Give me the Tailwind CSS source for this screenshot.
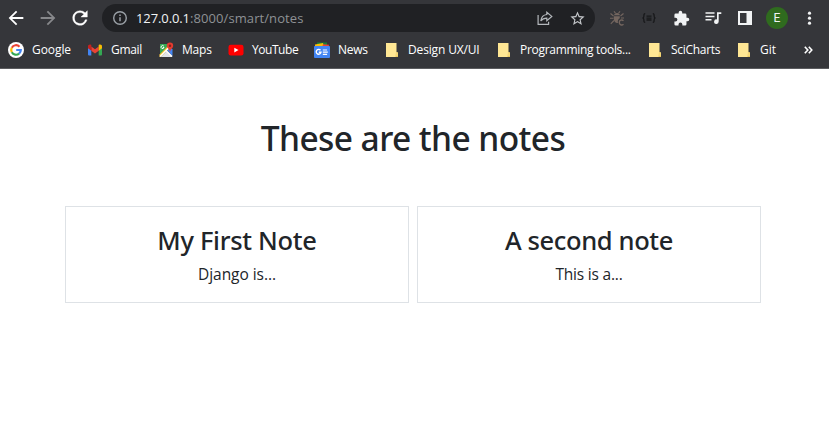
<!DOCTYPE html>
<html lang="en">
<head>
<meta charset="utf-8">
<title>Notes</title>
<script src="https://cdn.jsdelivr.net/npm/@tailwindcss/browser@4"></script>
</head>
<body class="h-[421px] overflow-hidden bg-white font-['Open_Sans','Noto_Sans',sans-serif] text-[#212529]">
<header class="h-[69px] border-b border-[#5b5c5f] bg-[#35363a] text-white">
  <!-- Toolbar -->
  <div class="flex h-9 items-center">
    <div class="flex w-[102px] text-white">
      <span class="flex w-8 justify-center"><svg class="size-[22px]" viewBox="0 0 24 24" fill="currentColor"><path d="M20 11H7.8l5.6-5.6L12 4l-8 8 8 8 1.4-1.4L7.8 13H20z"/></svg></span>
      <span class="flex w-8 justify-center text-[#87888b]"><svg class="size-[22px]" viewBox="0 0 24 24" fill="currentColor"><path d="M4 13h12.2l-5.6 5.6L12 20l8-8-8-8-1.4 1.4 5.6 5.6H4z"/></svg></span>
      <span class="flex w-8 justify-center"><svg class="size-[22px]" viewBox="0 0 24 24" fill="currentColor" stroke="currentColor" stroke-width=".4"><path d="M17.65 6.35A7.96 7.96 0 0 0 12 4a8 8 0 1 0 7.73 10h-2.08A6 6 0 1 1 12 6c1.66 0 3.14.69 4.22 1.78L13 11h7V4z"/></svg></span>
    </div>
    <div class="flex h-7 w-[493px] items-center rounded-full bg-[#202124] pl-[10px]">
      <svg class="size-4" viewBox="0 0 16 16" fill="none" stroke="#9aa0a6" stroke-width="1.4"><circle cx="8" cy="8" r="6.3"/><path d="M8 7.2v4M8 4.4V6" stroke-width="1.5"/></svg>
      <span class="ml-2 flex-1 whitespace-nowrap text-[13px] leading-4"><span class="tracking-[-0.1px] text-[#f1f3f4]">127.0.0.1</span><span class="tracking-[0.09px] text-[#8e9195]">:8000/smart/notes</span></span>
      <span class="flex w-8 justify-center"><svg class="size-4" viewBox="0 0 16 16" fill="none" stroke="#b4b8bc" stroke-width="1.2"><path d="M1.1 5v9.4h10.5v-2.6M9.8 2.2l5 4.2-5 4.2V8.2C7.200 8.200 5.200 9 3.800 11 4.200 7.600 6 4.900 9.800 4.500z"/></svg></span>
      <span class="mr-0.5 flex w-8 justify-center"><svg class="size-[17px]" viewBox="0 0 24 24" fill="#c4c7ca"><path d="m22 9.240-7.190-.620L12 2 9.190 8.630 2 9.240l5.460 4.730L5.820 21 12 17.270 18.180 21l-1.630-7.030zM12 15.400l-3.760 2.270 1-4.280-3.320-2.880 4.380-.380L12 6.100l1.710 4.040 4.380.380-3.320 2.880 1 4.280z"/></svg></span>
    </div>
    <div class="ml-1.5 flex items-center text-[#f1f3f4]">
      <span class="flex w-8 justify-center"><svg class="size-4" viewBox="0 0 16 16" fill="none" stroke="#74665f" stroke-width="1.100"><path d="M5 1.200 6.500 3.300M11 1.200 9.500 3.300M1.500 3.500 4.500 6M14.500 3.500 11.500 6M1 8.300h3.500M1.800 13.800 5 10.500M12 8H15"/><path d="M8 3C6.200 3 5.200 4 5 5.300h6C10.800 4 9.800 3 8 3zM4.800 6.300h6v1.900C9 9 8.500 11 9 12.900c-2.300.500-4.200-1.700-4.200-4z" fill="#74665f" stroke="none"/><path d="M14.500 10.700c-1.700-1.400-4.200-.500-4.200 1.800s2.500 3.200 4.200 1.800" stroke-width="1.400"/></svg></span>
      <span class="flex w-8 justify-center"><svg class="size-4" viewBox="0 0 16 16" fill="none" stroke="#17181a" stroke-width="1.300"><path d="M4.200 3.700C2.800 3.700 2.900 4.600 2.900 6S2.600 8 1.500 8c1.100 0 1.400.600 1.400 2s-.1 2.300 1.300 2.300M11.800 3.700c1.400 0 1.300.900 1.300 2.300s.3 2 1.400 2c-1.100 0-1.400.600-1.400 2s.1 2.300-1.300 2.300M5.500 6.200h5M5.500 8.100h5M5.500 10h5"/></svg></span>
      <span class="flex w-8 justify-center"><svg class="size-[17px]" viewBox="0 0 24 24" fill="currentColor"><path d="M20.500 11H19V7a2 2 0 0 0-2-2h-4V3.500a2.500 2.500 0 0 0-5 0V5H4a2 2 0 0 0-2 2v3.800h1.500a2.700 2.700 0 0 1 0 5.400H2V20a2 2 0 0 0 2 2h3.800v-1.500a2.700 2.700 0 0 1 5.400 0V22H17a2 2 0 0 0 2-2v-4h1.500a2.500 2.500 0 0 0 0-5z"/></svg></span>
      <span class="flex w-8 justify-center"><svg class="h-4 w-[17px]" viewBox="0 0 17 16" fill="currentColor"><path d="M.5 2.300h9v1.500h-9zM.5 5.700h9v1.500h-9zM.5 9.100h6v1.500h-6zM12 2.300h4.300v1.600h-2.600v7.700A2.300 2.300 0 1 1 12 9.400z"/></svg></span>
      <span class="flex w-8 justify-center"><svg class="size-[14px]" viewBox="0 0 14 14" fill="currentColor"><path fill-rule="evenodd" d="M0 0h14v14H0zM2 2v10h6.500V2z"/></svg></span>
      <span class="flex w-8 justify-center"><span class="flex size-[22px] items-center justify-center rounded-full bg-[#2f6b1e] font-[Roboto,sans-serif] text-[12px] leading-none">E</span></span>
      <span class="flex w-8 justify-center"><svg class="size-4" viewBox="0 0 16 16" fill="currentColor"><circle cx="8.500" cy="3.200" r="1.600"/><circle cx="8.500" cy="8.200" r="1.600"/><circle cx="8.500" cy="13.200" r="1.600"/></svg></span>
    </div>
  </div>
  <!-- Bookmarks bar -->
  <nav class="flex h-7 items-center whitespace-nowrap pl-2 text-[12px] leading-4">
    <svg class="mr-2 size-4 shrink-0" viewBox="0 0 16 16"><circle cx="8" cy="8" r="8" fill="#fff"/><g fill="none" stroke-width="2.200"><path d="M11.500 4.700A4.800 4.800 0 0 0 3.800 5.700" stroke="#ea4335"/><path d="M3.800 5.700a4.800 4.800 0 0 0 0 4.600" stroke="#fbbc05"/><path d="M3.800 10.300a4.800 4.800 0 0 0 7.300 1.300" stroke="#34a853"/><path d="M11.100 11.600A4.800 4.800 0 0 0 12.800 8H8.200" stroke="#4285f4"/></g></svg>
    <span class="w-[39px] tracking-[-0.07px]">Google</span>
    <svg class="ml-4 mr-2 size-4 shrink-0" viewBox="0 0 16 16"><path fill="#4285f4" d="M1 5.500 4.300 8v5.500H2a1 1 0 0 1-1-1z"/><path fill="#34a853" d="M15 5.500 11.700 8v5.500H14a1 1 0 0 0 1-1z"/><path fill="#ea4335" d="M4.300 4.500 8 7.300l3.700-2.800v4.300L8 11.500 4.300 8.800z"/><path fill="#c5221f" d="M1 4.500C1 2.900 2.800 2 4.300 3.100v5.700L1 6.300z"/><path fill="#fbbc04" d="M15 4.500c0-1.600-1.800-2.500-3.300-1.400v5.700L15 6.300z"/></svg>
    <span class="w-[31px] tracking-[-0.3px]">Gmail</span>
    <svg class="ml-4 mr-2 size-4 shrink-0" viewBox="0 0 16 16"><path fill="#34a853" d="M2 2h11L2 13z"/><path fill="#dfe3e8" d="m2.500 15 6-6 6 6z"/><path fill="#4285f4" d="m9 8 5.500 6V7l-2.500-1z"/><path fill="#fbc02d" d="M1.500 12.500 11 3l1.500 2L2.500 15h-1z"/><path stroke="#fff" stroke-width="1.500" d="m2 14.500 9-9M8.500 9l5.500 5.500"/><path fill="none" stroke="#fff" d="M5.800 4.200a1.500 1.500 0 1 0 .2 1.300H4.800"/><path fill="#e23b30" d="M12 .5a3.200 3.200 0 0 1 3.200 3.200c0 2.300-2.700 3-3.200 6.300-.5-3.300-3.200-4-3.200-6.300A3.200 3.200 0 0 1 12 .5z"/><circle cx="12" cy="3.700" r="1.200" fill="#87201a"/></svg>
    <span class="w-[30px] tracking-[-0.2px]">Maps</span>
    <svg class="ml-4 mr-2 size-4 shrink-0" viewBox="0 0 16 16"><rect x=".5" y="2.700" width="15" height="10.800" rx="2.200" fill="#f00"/><path fill="#fff" d="m6.300 5.800 4.200 2.300-4.200 2.300z"/></svg>
    <span class="w-[46px] tracking-[-0.45px]">YouTube</span>
    <svg class="ml-4 mr-2 size-4 shrink-0" viewBox="0 0 16 16"><path fill="#188038" d="M3 .5h10v4H3z"/><path fill="#fbbc04" d="m1 2.500 8-1.500 1 4H1z"/><path fill="#ea4335" d="m9 2.200 6 .5-.5 3H8z"/><rect y="4" width="16" height="12" rx="1" fill="#4285f4"/><path fill="none" stroke="#fff" stroke-width="1.400" d="M6.500 8.300A2.400 2.400 0 1 0 7 10.200H4.800"/><path stroke="#fff" stroke-width="1.200" d="M8.800 8h4.300M8.800 10.200h5M8.800 12.400h4.300"/></svg>
    <span class="w-[30px] tracking-[-0.3px]">News</span>
    <svg class="ml-4 mr-2 size-4 shrink-0" viewBox="0 0 16 16"><path fill="#ffe794" d="M2 1h10.500v9l1.500.5V15H2z"/><path fill="#e9c65c" d="M12 10.500h2V15h-2.500z"/><path fill="#ffe794" d="M12.500 11h1v3h-1z"/></svg>
    <span class="w-[72px] tracking-[-0.15px]">Design UX/UI</span>
    <svg class="ml-4 mr-2 size-4 shrink-0" viewBox="0 0 16 16"><path fill="#ffe794" d="M2 1h10.500v9l1.500.5V15H2z"/><path fill="#e9c65c" d="M12 10.500h2V15h-2.500z"/><path fill="#ffe794" d="M12.500 11h1v3h-1z"/></svg>
    <span class="w-[111px] tracking-[-0.3px]">Programming tools...</span>
    <svg class="ml-4 mr-2 size-4 shrink-0" viewBox="0 0 16 16"><path fill="#ffe794" d="M2 1h10.500v9l1.500.5V15H2z"/><path fill="#e9c65c" d="M12 10.500h2V15h-2.500z"/><path fill="#ffe794" d="M12.500 11h1v3h-1z"/></svg>
    <span class="w-[49px] tracking-[-0.3px]">SciCharts</span>
    <svg class="ml-4 mr-2 size-4 shrink-0" viewBox="0 0 16 16"><path fill="#ffe794" d="M2 1h10.500v9l1.500.5V15H2z"/><path fill="#e9c65c" d="M12 10.500h2V15h-2.500z"/><path fill="#ffe794" d="M12.500 11h1v3h-1z"/></svg>
    <span class="w-[17px]">Git</span>
    <svg class="ml-[27px] h-2 w-[9px]" viewBox="0 0 9 8" fill="none" stroke="#fff" stroke-width="1.600"><path d="m.8.800 3 3.200-3 3.200M4.800.800l3 3.200-3 3.200"/></svg>
  </nav>
</header>
<main class="pt-[46px] text-center">
  <h1 class="mr-[3px] font-['Noto_Sans',sans-serif] text-[33.5px] font-medium leading-[46px] tracking-[-0.58px]">These are the notes</h1>
  <div class="ml-[65px] mt-[45px] flex gap-2">
    <section class="h-[97px] w-[344px] border border-[#dee2e6] pt-4">
      <h2 class="font-['Noto_Sans',sans-serif] text-[25.5px] font-medium leading-[34px] tracking-[-0.3px]">My First Note</h2>
      <p class="mt-[5px] text-[15.5px] leading-6 tracking-[-0.05px]">Django is...</p>
    </section>
    <section class="h-[97px] w-[344px] border border-[#dee2e6] pt-4">
      <h2 class="font-['Noto_Sans',sans-serif] text-[25.5px] font-medium leading-[34px] tracking-[-0.37px]">A second note</h2>
      <p class="mt-[5px] text-[15.5px] leading-6 tracking-[-0.2px]">This is a...</p>
    </section>
  </div>
</main>
</body>
</html>
